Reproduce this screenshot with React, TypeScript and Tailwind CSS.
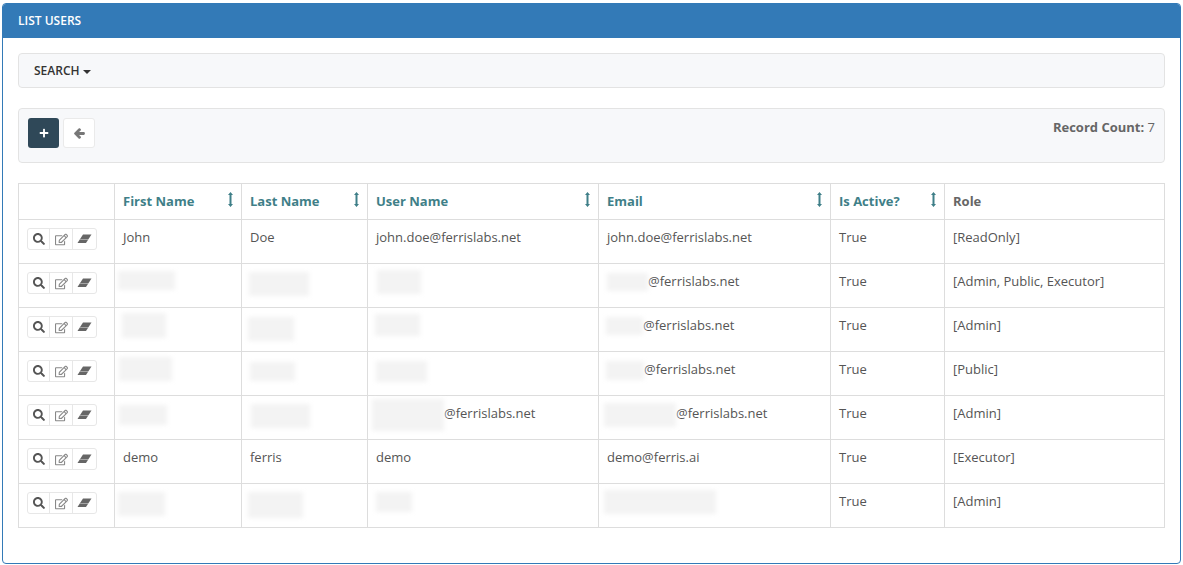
import { FaArrowLeft, FaPlus, FaRegEdit, FaSearch } from "react-icons/fa";

type Cell = string | { blur: string; text?: string };

const rows: Cell[][] = [
  ["John", "Doe", "john.doe@ferrislabs.net", "john.doe@ferrislabs.net", "True", "[ReadOnly]"],
  [
    { blur: "-ml-[5px] mt-[-1px] w-[57px] h-[19px]" },
    { blur: "-ml-[1px] mt-0 w-[60px] h-[24px]" },
    { blur: "ml-[1px] -mt-[2px] w-[44px] h-[24px]" },
    { blur: "ml-0 mt-[1px] w-[41px] h-[18px]", text: "@ferrislabs.net" },
    "True",
    "[Admin, Public, Executor]",
  ],
  [
    { blur: "-ml-[1px] -mt-[3px] w-[44px] h-[25px]" },
    { blur: "-ml-[2px] mt-[1px] w-[46px] h-[24px]" },
    { blur: "-ml-[1px] -mt-[2px] w-[45px] h-[22px]" },
    { blur: "-ml-[1px] mt-[1px] w-[37px] h-[18px]", text: "@ferrislabs.net" },
    "True",
    "[Admin]",
  ],
  [
    { blur: "-ml-[4px] -mt-[3px] w-[53px] h-[24px]" },
    { blur: "ml-0 mt-[2px] w-[45px] h-[19px]" },
    { blur: "ml-0 mt-[1px] w-[51px] h-[21px]" },
    { blur: "-ml-[1px] mt-[1px] w-[38px] h-[19px]", text: "@ferrislabs.net" },
    "True",
    "[Public]",
  ],
  [
    { blur: "-ml-[4px] mt-[1px] w-[48px] h-[20px]" },
    { blur: "ml-[1px] mt-0 w-[59px] h-[24px]" },
    { blur: "-ml-[4px] -mt-[5px] w-[72px] h-[32px]", text: "@ferrislabs.net" },
    { blur: "-ml-[3px] -mt-[1px] w-[72px] h-[24px]", text: "@ferrislabs.net" },
    "True",
    "[Admin]",
  ],
  ["demo", "ferris", "demo", "demo@ferris.ai", "True", "[Executor]"],
  [
    { blur: "-ml-[5px] mt-0 w-[47px] h-[24px]" },
    { blur: "-ml-[2px] mt-0 w-[55px] h-[26px]" },
    { blur: "ml-0 mt-0 w-[36px] h-[20px]" },
    { blur: "-ml-[3px] -mt-[2px] w-[112px] h-[24px]" },
    "True",
    "[Admin]",
  ],
];

const sortable = ["First Name", "Last Name", "User Name", "Email", "Is Active?"];

function SortIcon() {
  return (
    <svg viewBox="0 0 7 15" className="h-[15px] w-[7px] shrink-0 fill-[#3f7f88]">
      <path d="M3.5 0 6 3H4.5v9H6l-2.5 3L1 12h1.5V3H1z" />
    </svg>
  );
}

function EraserIcon() {
  return (
    <svg viewBox="0 0 15 10" className="h-[10px] w-[15px]">
      <path d="M6 0.5H14.5L9 9H0.5Z" fill="#666" />
      <path d="M3.4 5.2H11.6L11 6.1H2.8Z" fill="#fff" opacity="0.55" />
    </svg>
  );
}

function RowActions() {
  return (
    <div className="-ml-[1px] flex h-[22px] w-[70px] rounded-[3px] border border-[#e7e7e7] bg-white">
      <span className="flex w-[22px] items-center justify-center border-r border-[#e7e7e7]">
        <FaSearch className="h-[12px] w-[12px] text-[#555]" />
      </span>
      <span className="flex w-[23px] items-center justify-center border-r border-[#e7e7e7]">
        <FaRegEdit className="h-[13px] w-[13px] text-[#888]" />
      </span>
      <span className="flex flex-1 items-center justify-center">
        <EraserIcon />
      </span>
    </div>
  );
}

export default function App() {
  return (
    <div className="h-[565px] bg-white pt-[3px] pl-[2px] pr-[2px] font-['Open_Sans',sans-serif] text-[13px] leading-[18.5px] text-[#555]">
      <div className="h-[561px] overflow-hidden rounded-[4px] border border-[#337ab7] bg-white">
        <div className="flex h-[34px] items-center bg-[#337ab7] px-[15px] text-[12px] font-semibold text-white">
          LIST USERS
        </div>

        <div className="px-[15px] pt-[15px]">
          <div className="flex h-[35px] items-center rounded-[4px] border border-[#e3e3e3] bg-[#f7f8fa] px-[15px] pt-[2px] text-[12px] font-semibold text-[#333]">
            SEARCH
            <span className="ml-[3px] mt-[1px] border-x-[4px] border-t-[4px] border-x-transparent border-t-[#333]" />
          </div>

          <div className="mt-[20px] flex h-[55px] justify-between rounded-[4px] border border-[#e3e3e3] bg-[#f7f8fa] px-[9px] pt-[9px]">
            <div className="flex h-[30px] gap-[4px]">
              <button className="flex w-[31px] items-center justify-center rounded-[3px] bg-[#2f4858] text-white">
                <FaPlus className="h-[10px] w-[10px]" />
              </button>
              <button className="flex w-[32px] items-center justify-center rounded-[3px] border border-[#eaeaea] bg-white text-[#777]">
                <FaArrowLeft className="h-[11px] w-[11px] stroke-current stroke-[50]" />
              </button>
            </div>
            <div className="text-[#666]">
              <span className="font-bold">Record Count:</span> 7
            </div>
          </div>

          <table className="mt-[20px] w-[1146px] table-fixed border-collapse border border-[#ddd]">
            <colgroup>
              <col className="w-[96px]" />
              <col className="w-[127px]" />
              <col className="w-[126px]" />
              <col className="w-[231px]" />
              <col className="w-[232px]" />
              <col className="w-[114px]" />
              <col className="w-[220px]" />
            </colgroup>
            <thead>
              <tr className="h-[36px]">
                <th className="border border-[#ddd]" />
                {sortable.map((name) => (
                  <th key={name} className="border border-[#ddd] p-0 pb-[1px] pl-[8px] pr-[7px] text-left align-top">
                    <div className="flex justify-between pt-[8px] font-bold text-[#3f7f88]">
                      {name}
                      <SortIcon />
                    </div>
                  </th>
                ))}
                <th className="border border-[#ddd] px-[8px] text-left font-bold text-[#666]">Role</th>
              </tr>
            </thead>
            <tbody>
              {rows.map((row, i) => (
                <tr key={i} className="h-[44px]">
                  <td className="border border-[#ddd] p-[8px] pl-[9px] align-top">
                    <RowActions />
                  </td>
                  {row.map((cell, j) => (
                    <td key={j} className="border border-[#ddd] px-[8px] pt-[8px] align-top">
                      {typeof cell === "string" ? (
                        cell
                      ) : (
                        <div className="flex h-[18px] items-start">
                          <span className={`${cell.blur} shrink-0 bg-[#f3f3f3] blur-[2px]`} />
                          {cell.text}
                        </div>
                      )}
                    </td>
                  ))}
                </tr>
              ))}
            </tbody>
          </table>
        </div>
      </div>
    </div>
  );
}
